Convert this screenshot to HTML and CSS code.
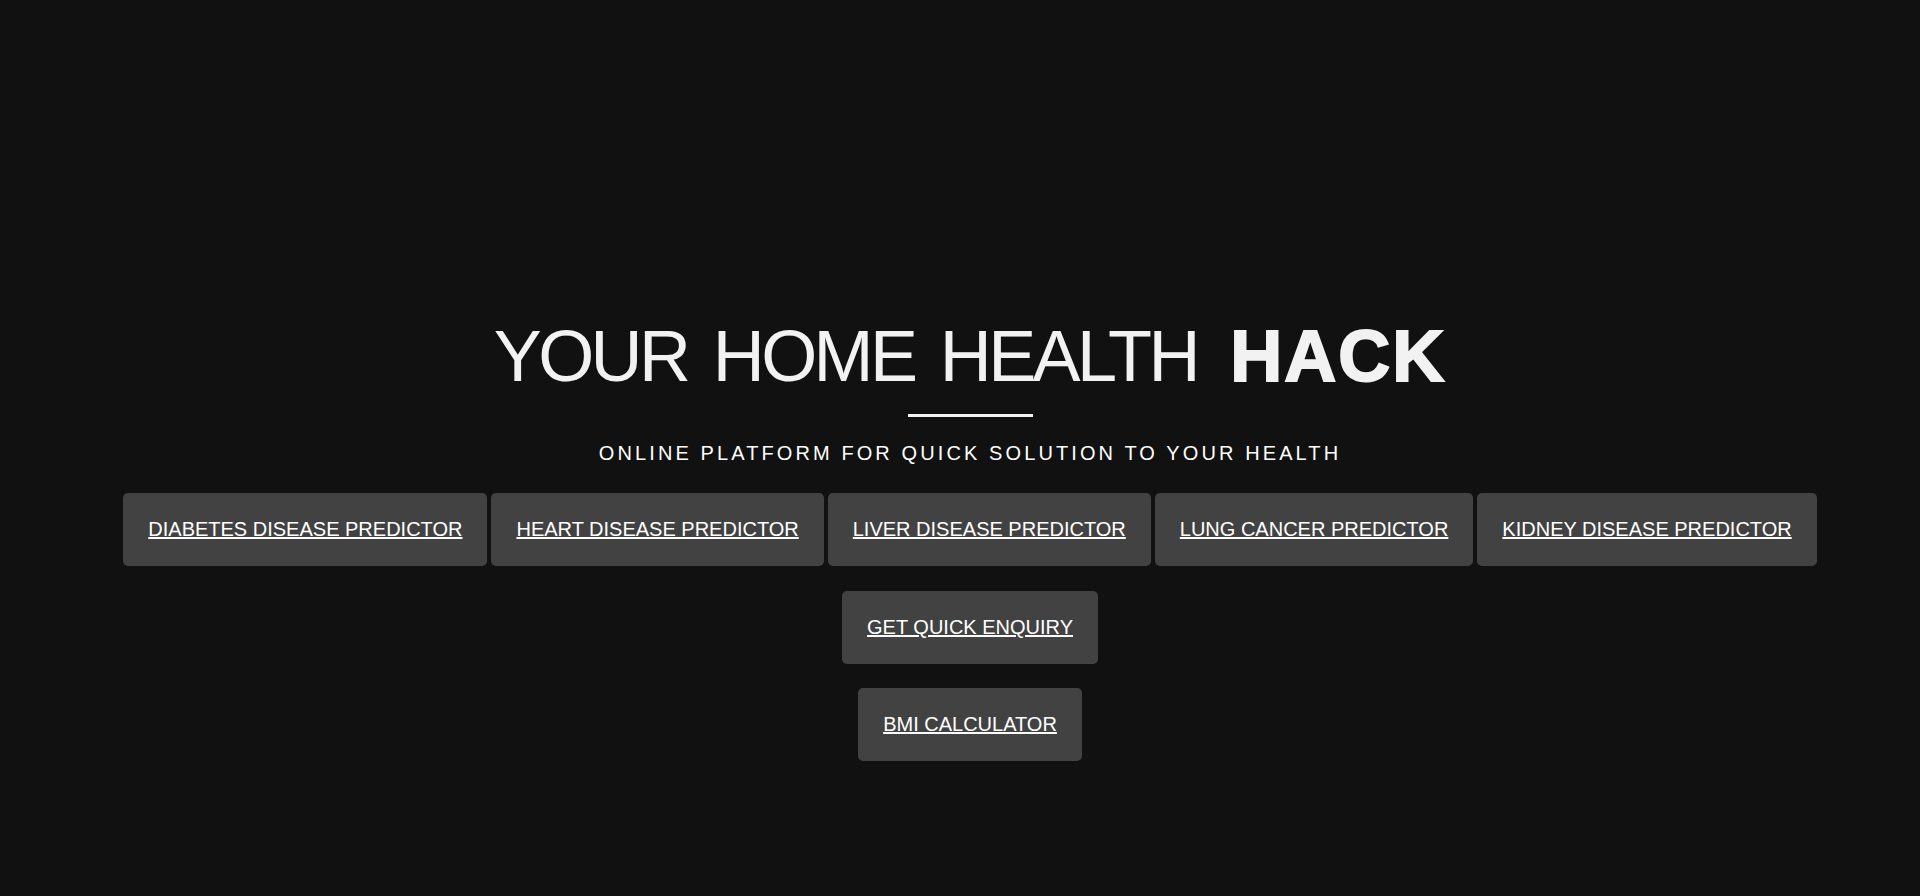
FILE: index.html
```html
<!DOCTYPE html>
<html lang="en">
<head>
<meta charset="utf-8">
<title>Your Home Health Hack</title>
<link rel="stylesheet" href="styles.css">
</head>
<body>
<main class="hero">
  <h1 class="title">YOUR HOME HEALTH <span class="title-strong">HACK</span></h1>
  <div class="divider"></div>
  <p class="subtitle">ONLINE PLATFORM FOR QUICK SOLUTION TO YOUR HEALTH</p>
  <nav class="row row-main">
    <a class="btn" href="#">DIABETES DISEASE PREDICTOR</a>
    <a class="btn" href="#">HEART DISEASE PREDICTOR</a>
    <a class="btn" href="#">LIVER DISEASE PREDICTOR</a>
    <a class="btn" href="#">LUNG CANCER PREDICTOR</a>
    <a class="btn" href="#">KIDNEY DISEASE PREDICTOR</a>
  </nav>
  <div class="row row-extra">
    <a class="btn" href="#">GET QUICK ENQUIRY</a>
  </div>
  <div class="row row-extra">
    <a class="btn" href="#">BMI CALCULATOR</a>
  </div>
</main>
</body>
</html>
```
FILE: styles.css
```css
html, body {
  margin: 0;
  padding: 0;
  background: #111111;
  height: 100%;
}

body {
  font-family: "Liberation Sans", Arial, sans-serif;
  color: #f2f2f2;
  overflow: hidden;
}

.hero {
  display: flex;
  flex-direction: column;
  align-items: center;
  padding: 320px 0 0 20px;
}

.title {
  margin: 0;
  font-size: 72px;
  line-height: 72px;
  font-weight: 400;
  letter-spacing: -3.6px;
  word-spacing: 9px;
  color: #f2f2f2;
  white-space: nowrap;
}

.title-strong {
  font-weight: 900;
  letter-spacing: 2px;
  margin-left: 8px;
  -webkit-text-stroke: 2px #f2f2f2;
}

.divider {
  width: 125px;
  height: 3px;
  background: #f2f2f2;
  margin-top: 22px;
}

.subtitle {
  margin: 25px 0 0;
  font-size: 20px;
  line-height: 23px;
  letter-spacing: 3.1px;
  color: #ffffff;
}

.row {
  display: flex;
  justify-content: center;
  gap: 4px;
}

.row-main {
  margin-top: 28px;
}

.row-extra {
  margin-top: 25px;
}

.row-extra + .row-extra {
  margin-top: 24px;
}

.btn {
  display: block;
  padding: 25px;
  font-size: 20px;
  line-height: 23px;
  color: #ffffff;
  background: #424242;
  border-radius: 5px;
  text-decoration: underline;
  white-space: nowrap;
}
```
